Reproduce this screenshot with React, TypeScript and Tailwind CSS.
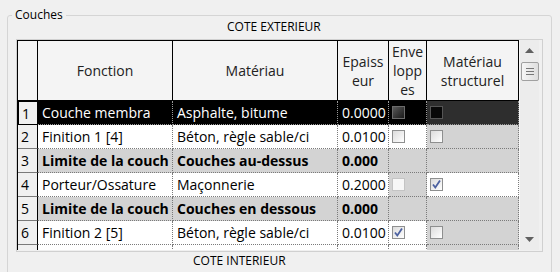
import React from "react";

type Cell = { text?: string; bold?: boolean; check?: "on" | "off" | "dis" | "dark" | "black"; bg?: string };
type Row = { n: number; label?: string; sel?: boolean; cells: Cell[] };

const rows: Row[] = [
  {
    n: 1,
    sel: true,
    cells: [
      { text: "Couche membra" },
      { text: "Asphalte, bitume" },
      { text: "0.0000" },
      { check: "dark" },
      { check: "black", bg: "bg-[#2e2e2e]" },
    ],
  },
  {
    n: 2,
    cells: [
      { text: "Finition 1 [4]" },
      { text: "Béton, règle sable/ci" },
      { text: "0.0100" },
      { check: "off" },
      { check: "off", bg: "bg-[#d3d3d3]" },
    ],
  },
  {
    n: 3,
    cells: [
      { text: "Limite de la couch", bold: true, bg: "bg-[#d3d3d3]" },
      { text: "Couches au-dessus", bold: true, bg: "bg-[#d3d3d3]" },
      { text: "0.000", bold: true, bg: "bg-[#d3d3d3]" },
      { bg: "bg-[#d3d3d3]" },
      { bg: "bg-[#d3d3d3]" },
    ],
  },
  {
    n: 4,
    cells: [
      { text: "Porteur/Ossature" },
      { text: "Maçonnerie" },
      { text: "0.2000" },
      { check: "dis", bg: "bg-[#d3d3d3]" },
      { check: "on" },
    ],
  },
  {
    n: 5,
    cells: [
      { text: "Limite de la couch", bold: true, bg: "bg-[#d3d3d3]" },
      { text: "Couches en dessous", bold: true, bg: "bg-[#d3d3d3]" },
      { text: "0.000", bold: true, bg: "bg-[#d3d3d3]" },
      { bg: "bg-[#d3d3d3]" },
      { bg: "bg-[#d3d3d3]" },
    ],
  },
  {
    n: 6,
    cells: [
      { text: "Finition 2 [5]" },
      { text: "Béton, règle sable/ci" },
      { text: "0.0100" },
      { check: "on" },
      { check: "off", bg: "bg-[#d3d3d3]" },
    ],
  },
  {
    // only the top edge of this row shows
    n: 7,
    label: "",
    cells: [{}, {}, {}, {}, { bg: "bg-[#d3d3d3]" }],
  },
];

const widths = ["w-[135px]", "w-[165px]", "w-[51px]", "w-[38px]", "w-[92px]"];

function Check({ kind }: { kind: NonNullable<Cell["check"]> }) {
  if (kind === "dark")
    return <div className="w-[13px] h-[13px] border border-[#6a6a6a] bg-gradient-to-br from-[#5a5a5a] to-[#1a1a1a]" />;
  if (kind === "black") return <div className="w-[13px] h-[13px] border border-[#555] bg-[#080808]" />;
  if (kind === "dis") return <div className="w-[13px] h-[13px] border border-[#c4c4c4] bg-[#f7f7f7]" />;
  return (
    <div className="w-[13px] h-[13px] border border-[#8e8f8f] bg-gradient-to-br from-[#dcdcdc] to-[#ffffff] flex items-center justify-center">
      {kind === "on" && (
        <svg width="11" height="11" viewBox="0 0 11 11">
          <path d="M2 5.5 L4.3 8.5 L9 1.5" fill="none" stroke="#4c61a0" strokeWidth="1.8" />
        </svg>
      )}
    </div>
  );
}

function Header() {
  const base = "h-[60px] border-r border-b border-black bg-[#f4f4f4] flex items-center justify-center text-center text-[#222] leading-[19px]";
  return (
    <div className="flex">
      <div className={`${base} w-[20px]`} />
      <div className={`${base} w-[135px]`}>Fonction</div>
      <div className={`${base} w-[165px]`}>Matériau</div>
      <div className={`${base} w-[51px] break-all px-[2px] leading-[18px]`}>Epaisseur</div>
      <div className={`${base} w-[38px] break-all px-[2px]`}>Enveloppes</div>
      <div className={`${base} w-[92px] px-[6px]`}>Matériau structurel</div>
    </div>
  );
}

function BodyRow({ row }: { row: Row }) {
  const dot = row.sel ? "border-[#9a9a9a]" : "border-[#7a7a7a]";
  return (
    <div className="flex h-[24px]">
      <div
        className={`w-[20px] h-[24px] bg-[#f0f0f0] border-r border-r-black border-solid pl-[3px] flex items-center ${
          row.sel ? "border-l border-t border-b border-dotted border-l-black border-t-black border-b-black" : "border-b border-dotted border-b-[#7a7a7a]"
        }`}
      >
        {row.label ?? row.n}
      </div>
      {row.cells.map((c, i) => {
        const bg = c.bg ? c.bg : row.sel ? "bg-black" : "bg-white";
        return (
          <div
            key={i}
            className={`${widths[i]} h-[24px] border-r border-b border-dotted ${dot} ${bg} ${
              row.sel ? "text-white" : "text-black"
            } ${c.bold ? "font-bold" : ""} flex items-center overflow-hidden whitespace-nowrap ${c.check ? "pl-[3px]" : "pl-[4px]"}`}
          >
            {c.text}
            {c.check && <Check kind={c.check} />}
          </div>
        );
      })}
    </div>
  );
}

function ScrollBar() {
  return (
    <div className="w-[20px] h-[210px] bg-[#ececec] border-l border-[#f8f8f8] flex flex-col items-center">
      <svg width="9" height="5" viewBox="0 0 9 5" className="mt-[8px]">
        <path d="M0 5 L4.5 0 L9 5 Z" fill="#606060" />
      </svg>
      <div className="mt-[9px] w-[18px] h-[19px] rounded-[2px] border border-[#a0a0a0] bg-gradient-to-r from-[#f6f6f6] to-[#dedede] flex flex-col items-center justify-center gap-[2px]">
        <div className="w-[8px] h-px bg-[#777]" />
        <div className="w-[8px] h-px bg-[#777]" />
        <div className="w-[8px] h-px bg-[#777]" />
      </div>
      <div className="flex-1" />
      <svg width="9" height="5" viewBox="0 0 9 5" className="mb-[8px]">
        <path d="M0 0 L4.5 5 L9 0 Z" fill="#606060" />
      </svg>
    </div>
  );
}

export default function App() {
  return (
    <div className="w-[560px] h-[272px] bg-[#f0f0f0] overflow-hidden pt-[7px] pl-[7px] font-['Open_Sans',sans-serif] text-[14px]">
      <fieldset className="w-[545px] h-[290px] border border-[#d5d5d5] rounded-[3px] px-0">
        <legend className="ml-[4px] px-[3px] text-[12px] leading-[16px] text-black">Couches</legend>
        <div className="-mt-[4px] h-[16px] leading-[16px] text-[12px] text-black pl-[219px]">COTE EXTERIEUR</div>
        <div className="mt-[4px] ml-[8px] w-[527px] h-[213px] border border-[#d0d0d0] flex">
          <div className="w-[502px] h-[210px] overflow-hidden border-l border-t border-black">
            <Header />
            {rows.map((r) => (
              <BodyRow key={r.n} row={r} />
            ))}
          </div>
          <ScrollBar />
        </div>
        <div className="mt-px h-[16px] leading-[16px] text-[12px] text-black pl-[185px]">COTE INTERIEUR</div>
      </fieldset>
    </div>
  );
}
